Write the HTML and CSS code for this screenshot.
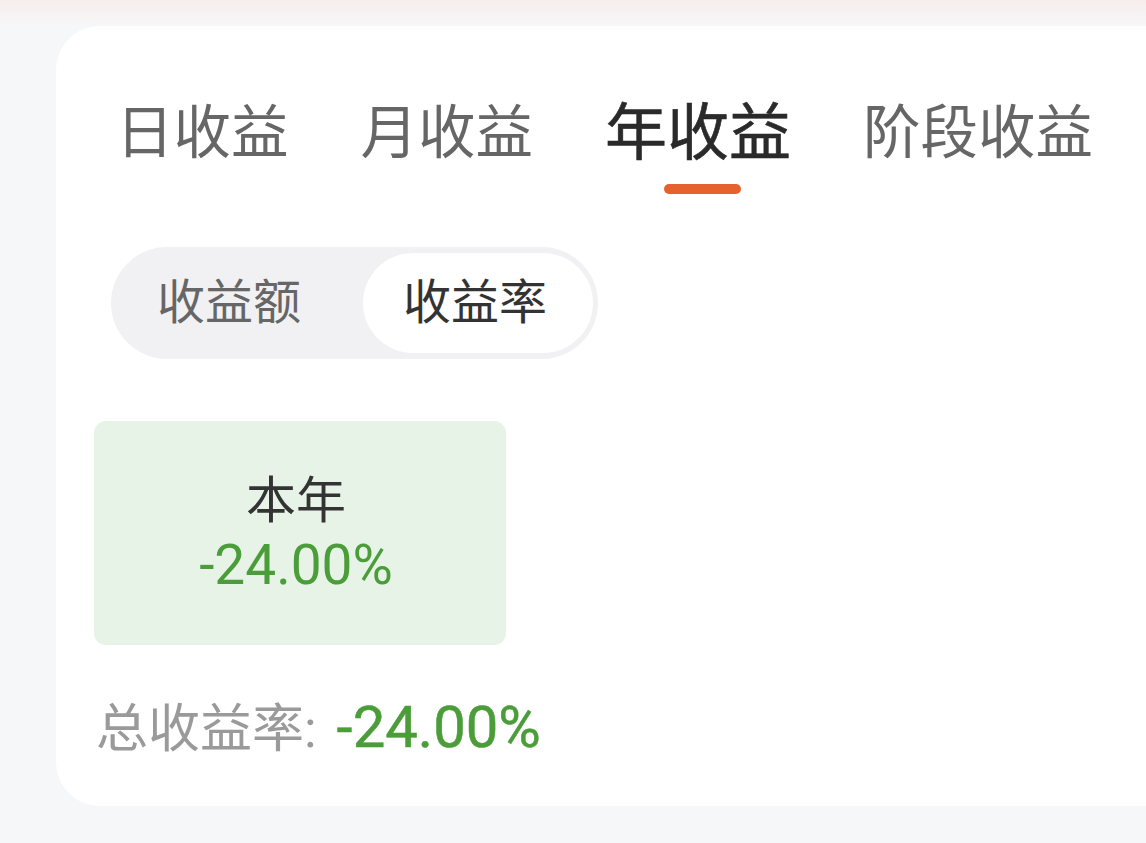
FILE: index.html
```html
<!DOCTYPE html>
<html lang="zh-CN">
<head>
<meta charset="utf-8">
<link rel="stylesheet" href="styles.css">
</head>
<body>
<div class="top-strip"></div>
<div class="panel">
  <div class="tabs">
    <div class="tab">日收益</div>
    <div class="tab">月收益</div>
    <div class="tab active">年收益<span class="underline"></span></div>
    <div class="tab">阶段收益</div>
  </div>
  <div class="segment">
    <div class="seg-item">收益额</div>
    <div class="seg-item selected">收益率</div>
  </div>
  <div class="cells">
    <div class="cell">
      <div class="cell-label">本年</div>
      <div class="cell-value">-24.00%</div>
    </div>
  </div>
  <div class="total">
    <span class="total-label">总收益率:</span><span class="total-value">-24.00%</span>
  </div>
</div>
</body>
</html>
```

FILE: styles.css
```css
* { box-sizing: border-box; }
html, body {
  margin: 0;
  padding: 0;
}
body {
  background: #f6f7f9;
  font-family: Roboto, "Noto Sans CJK SC", sans-serif;
  width: 1146px;
  height: 843px;
  overflow: hidden;
}
.top-strip {
  height: 26px;
  background: linear-gradient(#f6eeeb, #f6f7f9);
}
.panel {
  margin-left: 56px;
  width: 1140px;
  height: 780px;
  background: #ffffff;
  border-radius: 44px 0 0 44px;
  padding-top: 68px;
}
.tabs {
  display: flex;
  align-items: flex-start;
  padding-left: 60px;
  gap: 72px;
}
.tab {
  position: relative;
  height: 80px;
  line-height: 80px;
  font-size: 57.5px;
  color: #666666;
  white-space: nowrap;
}
.tab.active {
  font-size: 62px;
  color: #2a2a2a;
  font-weight: 400;
  -webkit-text-stroke: 0.6px #2a2a2a;
}
.underline {
  position: absolute;
  left: 50%;
  top: 90px;
  width: 77px;
  height: 10px;
  margin-left: -34px;
  border-radius: 5px;
  background: #e6622d;
}
.segment {
  margin-top: 73px;
  margin-left: 55px;
  width: 487px;
  height: 112px;
  border-radius: 56px;
  background: #f1f1f3;
  padding: 6px;
  display: flex;
  gap: 22px;
}
.seg-item {
  height: 100px;
  line-height: 100px;
  padding: 0 40px;
  border-radius: 50px;
  font-size: 48px;
  color: #666666;
  white-space: nowrap;
}
.seg-item.selected {
  background: #ffffff;
  color: #333333;
  padding: 0 46px 0 40px;
}
.cells {
  margin-top: 62px;
  margin-left: 38px;
  display: flex;
}
.cell {
  width: 412px;
  height: 224px;
  border-radius: 12px;
  background: #e6f3e6;
  display: flex;
  flex-direction: column;
  align-items: center;
  justify-content: center;
  gap: 4px;
  padding-right: 8px;
}
.cell-label {
  font-size: 50px;
  line-height: 60px;
  color: #333333;
}
.cell-value {
  font-size: 55px;
  line-height: 60px;
  color: #4a9d38;
}
.total {
  margin-top: 52px;
  margin-left: 40px;
  height: 60px;
  line-height: 60px;
  white-space: nowrap;
}
.total-label {
  font-size: 52px;
  color: #9a9a9a;
}
.total-value {
  margin-left: 20px;
  font-size: 58px;
  color: #4a9d38;
  -webkit-text-stroke: 0.5px #4a9d38;
}
```
